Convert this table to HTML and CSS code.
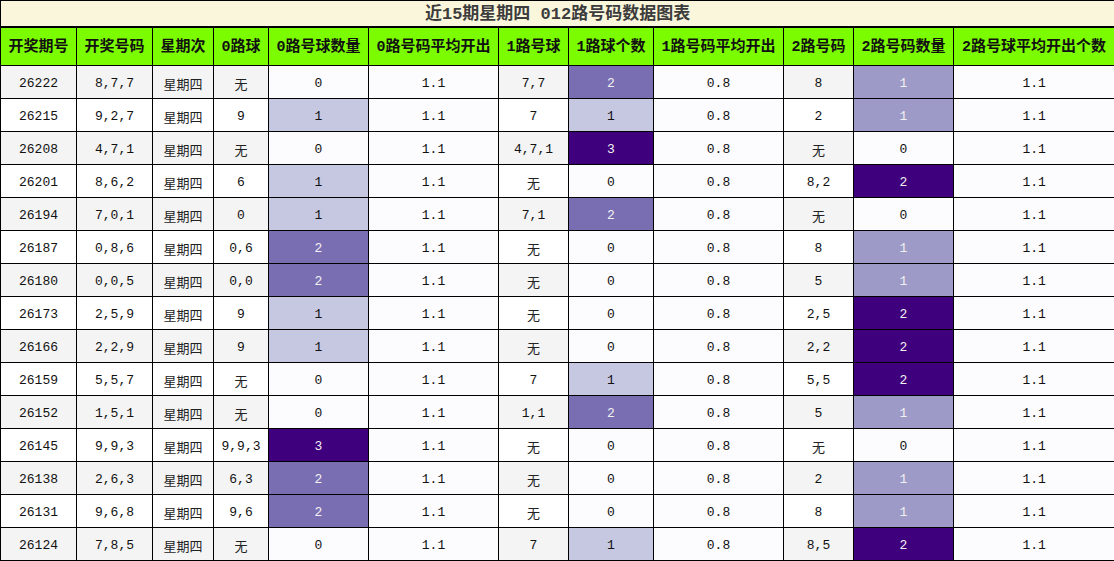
FILE: index.html
```html
<!DOCTYPE html>
<html lang="zh">
<head>
<meta charset="utf-8">
<link rel="stylesheet" href="styles.css">
<title>近15期星期四 012路号码数据图表</title>
</head>
<body>
<table class="chart">
  <colgroup>
    <col class="w76"><col class="w76"><col class="w61"><col class="w55"><col class="w100"><col class="w130">
    <col class="w70"><col class="w85"><col class="w130"><col class="w70"><col class="w100"><col class="w161">
  </colgroup>
  <thead>
    <tr class="title-row"><th colspan="12" class="title">近15期星期四 012路号码数据图表</th></tr>
    <tr class="head-row">
      <th>开奖期号</th><th>开奖号码</th><th>星期次</th><th>0路球</th><th>0路号球数量</th><th>0路号码平均开出</th>
      <th>1路号球</th><th>1路球个数</th><th>1路号码平均开出</th><th>2路号码</th><th>2路号码数量</th><th>2路号球平均开出个数</th>
    </tr>
  </thead>
  <tbody>
    <tr class="odd"><td>26222</td><td>8,7,7</td><td class="cn">星期四</td><td class="cn">无</td><td class="g0">0</td><td class="avg">1.1</td><td>7,7</td><td class="g67">2</td><td class="avg">0.8</td><td>8</td><td class="g50">1</td><td class="avg">1.1</td></tr>
    <tr class="even"><td>26215</td><td>9,2,7</td><td class="cn">星期四</td><td>9</td><td class="g33">1</td><td class="avg">1.1</td><td>7</td><td class="g33">1</td><td class="avg">0.8</td><td>2</td><td class="g50">1</td><td class="avg">1.1</td></tr>
    <tr class="odd"><td>26208</td><td>4,7,1</td><td class="cn">星期四</td><td class="cn">无</td><td class="g0">0</td><td class="avg">1.1</td><td>4,7,1</td><td class="g100">3</td><td class="avg">0.8</td><td class="cn">无</td><td class="g0">0</td><td class="avg">1.1</td></tr>
    <tr class="even"><td>26201</td><td>8,6,2</td><td class="cn">星期四</td><td>6</td><td class="g33">1</td><td class="avg">1.1</td><td class="cn">无</td><td class="g0">0</td><td class="avg">0.8</td><td>8,2</td><td class="g100">2</td><td class="avg">1.1</td></tr>
    <tr class="odd"><td>26194</td><td>7,0,1</td><td class="cn">星期四</td><td>0</td><td class="g33">1</td><td class="avg">1.1</td><td>7,1</td><td class="g67">2</td><td class="avg">0.8</td><td class="cn">无</td><td class="g0">0</td><td class="avg">1.1</td></tr>
    <tr class="even"><td>26187</td><td>0,8,6</td><td class="cn">星期四</td><td>0,6</td><td class="g67">2</td><td class="avg">1.1</td><td class="cn">无</td><td class="g0">0</td><td class="avg">0.8</td><td>8</td><td class="g50">1</td><td class="avg">1.1</td></tr>
    <tr class="odd"><td>26180</td><td>0,0,5</td><td class="cn">星期四</td><td>0,0</td><td class="g67">2</td><td class="avg">1.1</td><td class="cn">无</td><td class="g0">0</td><td class="avg">0.8</td><td>5</td><td class="g50">1</td><td class="avg">1.1</td></tr>
    <tr class="even"><td>26173</td><td>2,5,9</td><td class="cn">星期四</td><td>9</td><td class="g33">1</td><td class="avg">1.1</td><td class="cn">无</td><td class="g0">0</td><td class="avg">0.8</td><td>2,5</td><td class="g100">2</td><td class="avg">1.1</td></tr>
    <tr class="odd"><td>26166</td><td>2,2,9</td><td class="cn">星期四</td><td>9</td><td class="g33">1</td><td class="avg">1.1</td><td class="cn">无</td><td class="g0">0</td><td class="avg">0.8</td><td>2,2</td><td class="g100">2</td><td class="avg">1.1</td></tr>
    <tr class="even"><td>26159</td><td>5,5,7</td><td class="cn">星期四</td><td class="cn">无</td><td class="g0">0</td><td class="avg">1.1</td><td>7</td><td class="g33">1</td><td class="avg">0.8</td><td>5,5</td><td class="g100">2</td><td class="avg">1.1</td></tr>
    <tr class="odd"><td>26152</td><td>1,5,1</td><td class="cn">星期四</td><td class="cn">无</td><td class="g0">0</td><td class="avg">1.1</td><td>1,1</td><td class="g67">2</td><td class="avg">0.8</td><td>5</td><td class="g50">1</td><td class="avg">1.1</td></tr>
    <tr class="even"><td>26145</td><td>9,9,3</td><td class="cn">星期四</td><td>9,9,3</td><td class="g100">3</td><td class="avg">1.1</td><td class="cn">无</td><td class="g0">0</td><td class="avg">0.8</td><td class="cn">无</td><td class="g0">0</td><td class="avg">1.1</td></tr>
    <tr class="odd"><td>26138</td><td>2,6,3</td><td class="cn">星期四</td><td>6,3</td><td class="g67">2</td><td class="avg">1.1</td><td class="cn">无</td><td class="g0">0</td><td class="avg">0.8</td><td>2</td><td class="g50">1</td><td class="avg">1.1</td></tr>
    <tr class="even"><td>26131</td><td>9,6,8</td><td class="cn">星期四</td><td>9,6</td><td class="g67">2</td><td class="avg">1.1</td><td class="cn">无</td><td class="g0">0</td><td class="avg">0.8</td><td>8</td><td class="g50">1</td><td class="avg">1.1</td></tr>
    <tr class="odd"><td>26124</td><td>7,8,5</td><td class="cn">星期四</td><td class="cn">无</td><td class="g0">0</td><td class="avg">1.1</td><td>7</td><td class="g33">1</td><td class="avg">0.8</td><td>8,5</td><td class="g100">2</td><td class="avg">1.1</td></tr>
  </tbody>
</table>
</body>
</html>
```

FILE: styles.css
```css
html, body {
  margin: 0;
  padding: 0;
  background: #ffffff;
}

.chart {
  border-collapse: collapse;
  table-layout: fixed;
  width: 1114px;
  font-family: "Liberation Mono", "Noto Sans CJK SC", monospace;
  color: #111111;
}

.w76 { width: 76px; }
.w61 { width: 61px; }
.w55 { width: 55px; }
.w100 { width: 100px; }
.w130 { width: 130px; }
.w70 { width: 70px; }
.w85 { width: 85px; }
.w161 { width: 161px; }

.chart th,
.chart td {
  border: 1px solid #000000;
  padding: 0;
  text-align: center;
  vertical-align: middle;
  white-space: nowrap;
  overflow: hidden;
}

.title-row .title {
  height: 22px;
  padding-top: 3px;
  background: #faf6dc;
  color: #3c3c3c;
  font-size: 17px;
  font-weight: bold;
  border-bottom: 2px solid #000000;
  line-height: 22px;
}

.head-row th {
  height: 35px;
  padding-top: 2px;
  background: #7cfc00;
  color: #111111;
  font-size: 15px;
  font-weight: bold;
  line-height: 20px;
}

.chart td {
  height: 28px;
  padding-top: 4px;
  font-size: 13px;
  line-height: 18px;
}

.chart td.cn {
  height: 24px;
  padding-top: 8px;
  color: #222222;
}

.odd td { background: #f4f4f4; }
.even td { background: #ffffff; }

.chart td.avg,
.chart td.g0 { background: #fcfbfd; color: #111111; }
.chart td.g33 { background: #c6c7e1; color: #111111; }
.chart td.g50 { background: #9e9ac8; color: #f1f1f1; }
.chart td.g67 { background: #796eb2; color: #f1f1f1; }
.chart td.g100 { background: #3f007d; color: #f1f1f1; }
```
